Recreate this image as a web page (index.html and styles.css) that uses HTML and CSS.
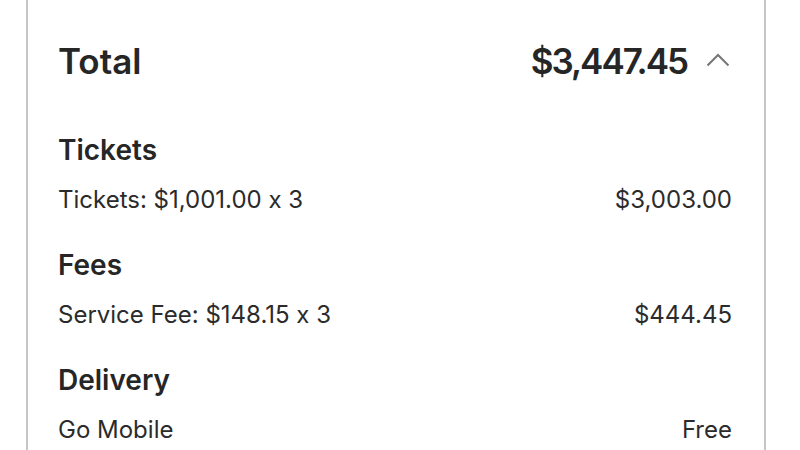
FILE: index.html
```html
<!DOCTYPE html>
<html>
<head>
<meta charset="utf-8">
<link rel="stylesheet" href="styles.css">
</head>
<body>
<div class="card">
  <div class="total-row">
    <span class="total-label">Total</span>
    <span class="total-amount">
      <span class="amount">$3,447.45</span>
      <svg class="chev" width="24" height="14" viewBox="0 0 24 14"><path d="M1.5 12.5 L12 2 L22.5 12.5" fill="none" stroke="#767676" stroke-width="2"/></svg>
    </span>
  </div>
  <div class="section">
    <div class="sec-title">Tickets</div>
    <div class="line"><span>Tickets: $1,001.00 x 3</span><span>$3,003.00</span></div>
  </div>
  <div class="section">
    <div class="sec-title">Fees</div>
    <div class="line"><span>Service Fee: $148.15 x 3</span><span>$444.45</span></div>
  </div>
  <div class="section">
    <div class="sec-title">Delivery</div>
    <div class="line"><span>Go Mobile</span><span>Free</span></div>
  </div>
</div>
</body>
</html>
```

FILE: styles.css
```css
html, body {
  margin: 0;
  padding: 0;
  background: #ffffff;
  overflow: hidden;
}
body {
  font-family: Inter, "Noto Sans", sans-serif;
  font-feature-settings: "calt" 0;
  color: #262626;
  width: 800px;
  height: 450px;
}
.card {
  margin-left: 26px;
  width: 740px;
  border-left: 2px solid #c6c6c6;
  border-right: 2px solid #c6c6c6;
  padding: 39px 32px 0 30px;
  box-sizing: border-box;
  height: 450px;
}
.total-row {
  display: flex;
  justify-content: space-between;
  align-items: center;
  line-height: 44px;
  height: 44px;
  margin-bottom: 49px;
}
.total-label, .total-amount {
  font-size: 35px;
  font-weight: 600;
}
.amount { letter-spacing: -2px; }
.total-amount {
  display: flex;
  align-items: center;
  gap: 19px;
  margin-right: 2px;
}
.chev { margin-top: -2px; }
.section { margin-top: 31px; }
.sec-title {
  font-size: 28px;
  font-weight: 600;
  line-height: 36px;
}
.line {
  display: flex;
  justify-content: space-between;
  font-size: 24px;
  line-height: 32px;
  margin-top: 16px;
  color: #2b2b2b;
}
```
